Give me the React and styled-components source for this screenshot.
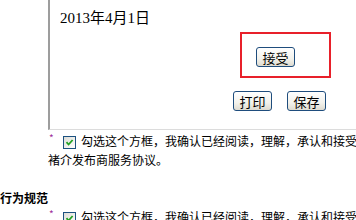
import React from "react";
import styled, { createGlobalStyle } from "styled-components";

const Global = createGlobalStyle`
  html, body { margin: 0; padding: 0; background: #fff; }
  body { width: 356px; height: 220px; overflow: hidden; }
`;

const Page = styled.div`
  width: 356px;
  height: 220px;
  overflow: hidden;
  font-family: "Noto Sans CJK SC", "Liberation Sans", sans-serif;
  color: #000;
`;

const Panel = styled.div`
  margin-left: 48px;
  width: 420px;
  border-left: 2px solid #9d9d9d;
  border-bottom: 1px solid #dcdcdc;
  padding: 9px 0 18px 10px;
`;

const DateLine = styled.div`
  font-family: "Liberation Serif", "Noto Sans CJK SC", serif;
  font-size: 15px;
  line-height: 18px;
  height: 18px;
`;

const AcceptBox = styled.div`
  margin: 5px 0 0 180px;
  width: 91px;
  height: 46px;
  box-sizing: border-box;
  border: 2px solid #e8202a;
  padding: 13px 0 0 14px;
`;

const ButtonRow = styled.div`
  display: flex;
  gap: 15px;
  margin: 13px 0 0 173px;
`;

const Button = styled.button`
  width: 39px;
  height: 20px;
  box-sizing: border-box;
  padding: 0;
  border: 1px solid #1f4d7d;
  border-radius: 3px;
  background: linear-gradient(#ffffff 0%, #f3f2ec 60%, #dedbd0 100%);
  font-family: "Noto Sans CJK SC", sans-serif;
  font-size: 13px;
  line-height: 17px;
  color: #000;
  display: flex;
  align-items: center;
  justify-content: center;
`;

const Agreement = styled.div`
  margin-left: 48px;
  margin-top: ${(p) => p.$top}px;
  font-size: 12px;
  line-height: 19px;
  white-space: nowrap;
`;

const Star = styled.span`
  display: inline-block;
  width: 14px;
  font-size: 10px;
  line-height: 10px;
  color: #a0309a;
  vertical-align: 4px;
  padding-left: 1px;
`;

const Box = styled.span`
  display: inline-block;
  width: 13px;
  height: 13px;
  box-sizing: border-box;
  border: 1px solid #1c5180;
  background: linear-gradient(135deg, #dcdcd6, #ffffff);
  vertical-align: -3px;
  margin-right: 5px;
  position: relative;
  svg { position: absolute; left: 1px; top: 1px; }
`;

const Heading = styled.div`
  margin-top: 19px;
  font-size: 12px;
  font-weight: bold;
  line-height: 19px;
`;

const Check = () => (
  <Box>
    <svg width="9" height="9" viewBox="0 0 9 9">
      <path d="M1.5 4.2 L3.6 6.5 L7.6 2" fill="none" stroke="#21a121" strokeWidth="1.8" />
    </svg>
  </Box>
);

export default function App() {
  return (
    <Page>
      <Global />
      <Panel>
        <DateLine>2013年4月1日</DateLine>
        <AcceptBox>
          <Button>接受</Button>
        </AcceptBox>
        <ButtonRow>
          <Button>打印</Button>
          <Button>保存</Button>
        </ButtonRow>
      </Panel>
      <Agreement $top={1}>
        <Star>*</Star>
        <Check />
        勾选这个方框，我确认已经阅读，理解，承认和接受
        <br />
        褚介发布商服务协议。
      </Agreement>
      <Heading>行为规范</Heading>
      <Agreement $top={0}>
        <Star>*</Star>
        <Check />
        勾选这个方框，我确认已经阅读，理解，承认和接受
      </Agreement>
    </Page>
  );
}
